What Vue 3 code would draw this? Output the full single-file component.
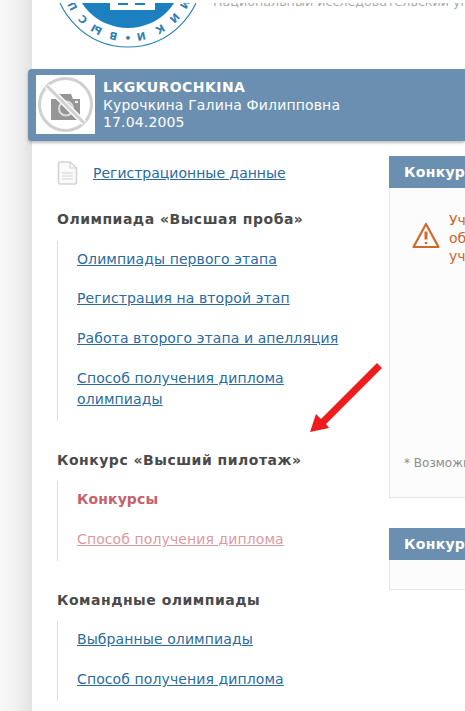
<script setup>
const groups = [
  { title: 'Олимпиада «Высшая проба»', items: [
    { text: 'Олимпиады первого этапа' },
    { text: 'Регистрация на второй этап' },
    { text: 'Работа второго этапа и апелляция' },
    { text: 'Способ получения диплома олимпиады' }
  ] },
  { title: 'Конкурс «Высший пилотаж»', items: [
    { text: 'Конкурсы', kind: 'current' },
    { text: 'Способ получения диплома', kind: 'faded' }
  ] },
  { title: 'Командные олимпиады', items: [
    { text: 'Выбранные олимпиады' },
    { text: 'Способ получения диплома' }
  ] }
]
const ringRadius = 61
const ringLetters = [
  ['М', 62], ['И', 46], ['К', 30], ['И', 12], ['•', 0], ['В', -13], ['Ы', -29], ['С', -44], ['Ш', -61]
].map(([ch, deg]) => ({ ch, offset: ((90 - deg) * Math.PI / 180) * ringRadius }))
</script>

<template>
  <div class="page">
    <div class="main">
      <header class="head">
        <svg class="logo" width="150" height="66" viewBox="0 0 150 66">
          <defs>
            <path id="ringPath" d="M 136 -30 A 61 61 0 1 1 14 -30" />
          </defs>
          <circle cx="75" cy="-30" r="74" fill="#fff" stroke="#2f83bb" stroke-width="1.2" />
          <circle cx="75" cy="-30" r="55" fill="#1c7fbf" />
          <path d="M57 -6H102V7H57Z" fill="#fff" />
          <rect x="65" y="-1" width="10" height="3" fill="#1c7fbf" />
          <rect x="82" y="-1" width="10" height="3" fill="#1c7fbf" />
          <text v-for="(l, i) in ringLetters" :key="i" class="ring" fill="#2f7fb4" text-anchor="middle">
            <textPath href="#ringPath" :startOffset="l.offset">{{ l.ch }}</textPath>
          </text>
        </svg>
        <p class="uni">Национальный исследовательский университет</p>
      </header>

      <section class="user">
        <div class="avatar">
          <svg width="59" height="59" viewBox="0 0 59 59">
            <path d="M15 24H20L22 19H35L37 24H44V45H15Z" fill="#969696" />
            <circle cx="30" cy="33.5" r="7" fill="none" stroke="#dcdcdc" stroke-width="2" />
            <rect x="39" y="26" width="3" height="2" fill="#eee" />
            <circle cx="29.5" cy="29.5" r="26" fill="none" stroke="#d0d0d0" stroke-width="3" />
            <path d="M11 11L48 48" stroke="#fff" stroke-width="6" />
            <path d="M11 11L48 48" stroke="#d0d0d0" stroke-width="3" />
          </svg>
        </div>
        <div class="who">
          <div class="login">LKGKUROCHKINA</div>
          <div class="name">Курочкина Галина Филипповна</div>
          <div class="name">17.04.2005</div>
        </div>
      </section>

      <div class="columns">
        <nav class="side">
          <div class="reg">
            <svg width="21" height="24" viewBox="0 0 21 24" fill="none" stroke="#d4d4d4" stroke-width="1.6">
              <path d="M1.5 2.5Q1.5 1 3 1H13L19.5 7V21.5Q19.5 23 18 23H3Q1.5 23 1.5 21.5Z" fill="#fafafa" />
              <path d="M13 1V7H19.5M5 12H16M5 15H16M5 18H16" stroke-width="1.2" />
            </svg>
            <a href="#" class="link reg-link">Регистрационные данные</a>
          </div>

          <div v-for="g in groups" :key="g.title" class="group">
            <h3>{{ g.title }}</h3>
            <ul>
              <li v-for="it in g.items" :key="it.text">
                <a href="#" class="link" :class="it.kind">{{ it.text }}</a>
              </li>
            </ul>
          </div>
        </nav>

        <div class="content">
          <section class="panel first">
            <h2>Конкурсы</h2>
            <div class="panel-body">
              <div class="warn">
                <svg width="28" height="28" viewBox="0 0 28 28" fill="none" stroke="#d2692c" stroke-width="2.2" stroke-linejoin="round">
                  <path d="M14 3L26.5 26H1.5Z" />
                  <path d="M14 10.5V18.5" stroke-width="3" />
                  <circle cx="14" cy="22" r="1.3" fill="#d2692c" stroke="none" />
                </svg>
                <div class="warn-text">Уч<br>об<br>уч</div>
              </div>
              <p class="note">* Возможно</p>
            </div>
          </section>
          <section class="panel second">
            <h2>Конкурсы</h2>
            <div class="panel-body"></div>
          </section>
        </div>
      </div>
    </div>

    <svg class="arrow" width="80" height="80" viewBox="0 0 80 80">
      <path d="M2 71L8 53L13 58L69 2L74 7L18 63L21 67Z" fill="#ee1c1c" />
    </svg>
  </div>
</template>

<style>
html, body { margin: 0; background: #fff; overflow: hidden; }
</style>

<style scoped>
.page {
  position: relative;
  box-sizing: border-box;
  height: 711px;
  width: 465px;
  overflow: hidden;
  padding: 3px 0 0 32px;
  font-family: "DejaVu Sans", Verdana, sans-serif;
  font-size: 14px;
  background: linear-gradient(to right, #f8f8f8 0, #f4f4f4 12px, #e3e3e3 32px, #fff 32px) no-repeat;
}
.main { background: #fff; height: 708px; }
.head {
  display: flex;
  height: 66px;
  overflow: hidden;
}
.logo { flex: none; margin-left: 21px; }
.ring { font: 700 10.5px "DejaVu Sans", sans-serif; }
.uni {
  margin: -10px 0 0 10px;
  white-space: nowrap;
  color: #a9a9a9;
  font-size: 12.7px;
  line-height: 18px;
}
.user {
  display: flex;
  gap: 8px;
  box-sizing: border-box;
  height: 72px;
  margin-left: -4px;
  padding: 6px 8px;
  background: #6b8fb0;
  border-radius: 4px 0 0 4px;
  box-shadow: 0 2px 3px rgba(0, 0, 0, 0.25);
  color: #fff;
  line-height: 17.5px;
}
.avatar { flex: none; width: 59px; height: 59px; background: #fff; }
.avatar svg { display: block; }
.who { padding-top: 4px; white-space: nowrap; }
.login { font-weight: 700; letter-spacing: 0.45px; }
.name { letter-spacing: 0.15px; }
.columns { display: flex; }
.side { flex: none; width: 357px; box-sizing: border-box; padding: 20px 0 0 25px; }
.reg { display: flex; align-items: center; gap: 15px; height: 24px; }
.link { color: #2a6b9f; text-decoration: underline; line-height: 21px; letter-spacing: 0.1px; }
.reg-link { letter-spacing: 0; }
.link.current { color: #c4626b; font-weight: 700; text-decoration: none; }
.link.faded { color: #dc9aa0; }
.group h3 {
  margin: 0;
  color: #4a4a4a;
  font-size: 14px;
  font-weight: 700;
  line-height: 20px;
  letter-spacing: 0.5px;
}
.reg + .group { margin-top: 24px; }
.group + .group { margin-top: 28.5px; }
.group ul {
  list-style: none;
  margin: 11.7px 0 0;
  padding: 8px 25px 11px 19px;
  border-left: 1px solid #ddd;
}
.group li + li { margin-top: 18.8px; }
.content { flex: none; width: 200px; padding-top: 15px; }
.panel h2 {
  margin: 0;
  height: 32px;
  padding-left: 15px;
  background: #6b8fb0;
  color: #fff;
  font-size: 14px;
  font-weight: 700;
  line-height: 32px;
  letter-spacing: 0.3px;
  white-space: nowrap;
}
.panel-body {
  box-sizing: border-box;
  border: 1px solid #e6e6e6;
  border-top: 0;
  background: #fcfcfc;
}
.first .panel-body { height: 310px; padding: 23px 0 0 22px; }
.second { margin-top: 30px; }
.second .panel-body { height: 30px; }
.warn { display: flex; gap: 9px; height: 244px; }
.warn svg { margin-top: 10px; }
.warn-text { color: #c9672f; line-height: 18px; }
.note { margin: 0 0 0 -8px; color: #8c8c8c; font-size: 12px; line-height: 16px; white-space: nowrap; }
.arrow { position: absolute; left: 308px; top: 361px; }
</style>
